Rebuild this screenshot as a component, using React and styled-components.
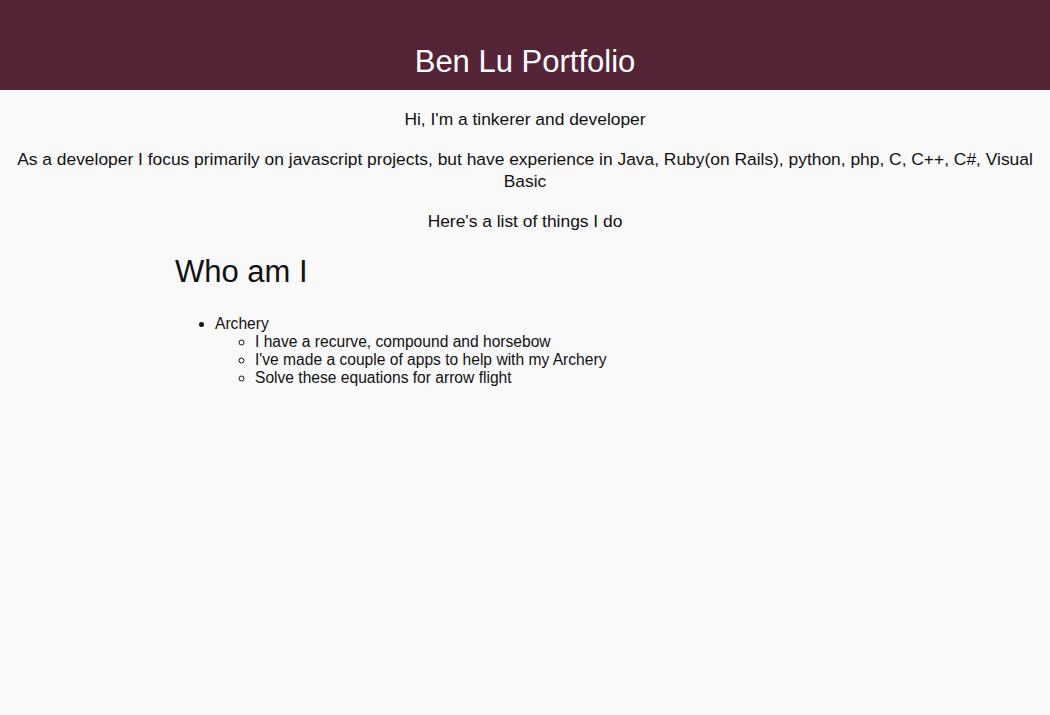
import styled, { createGlobalStyle } from "styled-components";

const GlobalStyle = createGlobalStyle`
  html, body {
    margin: 0;
    padding: 0;
    background: #f9f9f9;
    font-family: "Liberation Sans", Arial, sans-serif;
    color: #111;
  }
`;

const Header = styled.header`
  background: #552436;
  height: 90px;
  display: flex;
  align-items: flex-end;
  justify-content: center;
`;

const Title = styled.h1`
  margin: 0 0 10px;
  color: #fff;
  font-size: 31px;
  font-weight: normal;
  line-height: 36px;
`;

const Intro = styled.section`
  padding: 18px 16px 0;
  text-align: center;
`;

const Para = styled.p`
  margin: 0 0 18px;
  font-size: 17.4px;
  line-height: 22px;
`;

const Container = styled.main`
  max-width: 700px;
  margin: 0 auto;
`;

const Heading = styled.h2`
  margin: 20px 0 23px;
  font-size: 31px;
  font-weight: normal;
  line-height: 40px;
`;

const List = styled.ul`
  margin: 0;
  padding-left: 40px;
  font-size: 15.6px;
  line-height: 18px;
  list-style-type: ${(p) => (p.$nested ? "circle" : "disc")};
`;

export default function App() {
  return (
    <>
      <GlobalStyle />
      <Header>
        <Title>Ben Lu Portfolio</Title>
      </Header>
      <Intro>
        <Para>Hi, I'm a tinkerer and developer</Para>
        <Para>
          As a developer I focus primarily on javascript projects, but have experience in Java, Ruby(on Rails), python,
          php, C, C++, C#, Visual Basic
        </Para>
        <Para>Here's a list of things I do</Para>
      </Intro>
      <Container>
        <Heading>Who am I</Heading>
        <List>
          <li>
            Archery
            <List $nested>
              <li>I have a recurve, compound and horsebow</li>
              <li>I've made a couple of apps to help with my Archery</li>
              <li>Solve these equations for arrow flight</li>
            </List>
          </li>
        </List>
      </Container>
    </>
  );
}
